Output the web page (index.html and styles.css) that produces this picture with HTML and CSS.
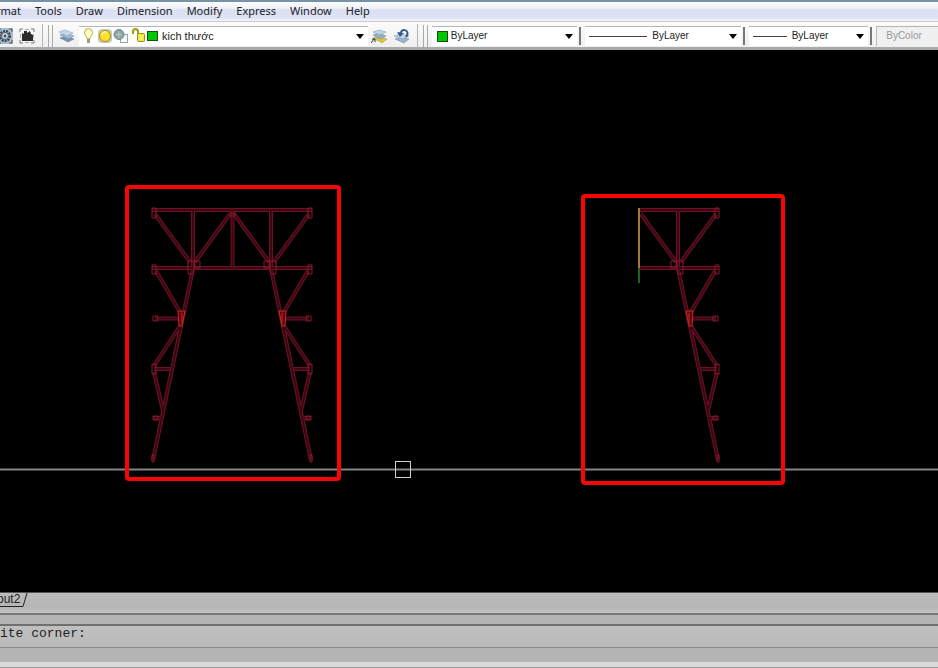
FILE: index.html
```html
<!DOCTYPE html>
<html lang="en">
<head>
<meta charset="utf-8">
<title>Drawing</title>
<link rel="stylesheet" href="styles.css">
</head>
<body>
<nav class="menubar">
  <button>rmat</button>
  <button>Tools</button>
  <button>Draw</button>
  <button>Dimension</button>
  <button>Modify</button>
  <button>Express</button>
  <button>Window</button>
  <button>Help</button>
</nav>

<div class="toolbar">
  <div class="tools">
    <button class="tool" aria-label="Settings">
      <svg width="16" height="16" viewBox="0 0 16 16"><rect width="16" height="16" fill="#a9bccb"/><path d="M1 1h3M1 1v3M15 1h-3M15 1v3M1 15h3M1 15v-3M15 15h-3M15 15v-3" stroke="#4c5a66" fill="none"/><circle cx="8" cy="8" r="5" fill="none" stroke="#35404a" stroke-width="2" stroke-dasharray="2 1"/><circle cx="8" cy="8" r="3.5" fill="#d4dfe8" stroke="#46525d"/><circle cx="8" cy="8" r="1.5" fill="#46525d"/></svg>
    </button>
    <button class="tool" aria-label="Block">
      <svg width="16" height="16" viewBox="0 0 16 16"><path d="M1 4V1h3M12 1h3v3M15 12v3h-3M4 15H1v-3" fill="none" stroke="#777"/><path d="M1.500 6v4M14.500 6v4M6 1.500h4M6 14.500h4" stroke="#aaa"/><path d="M3 13V5l2 1V3h3v2l3-2 1 3 2 1v6z" fill="#2b2b2b"/></svg>
    </button>
  </div>
  <span class="edge"></span>
  <span class="grip"></span>
  <button class="tool layers" aria-label="Layer manager">
    <svg width="16" height="16" viewBox="0 0 16 16"><path d="M1 10l6-2 8 3-6 3z" fill="#7893ad" stroke="#5f7a93" stroke-width=".5"/><path d="M1 7l6-2 8 3-6 3z" fill="#a1bad0" stroke="#6785a1" stroke-width=".5"/><path d="M0 4l6-2 8 3-6 3z" fill="#c6d9e8" stroke="#7c9ab6" stroke-width=".5"/></svg>
  </button>
  <div class="combo layer">
    <svg width="76" height="16" viewBox="0 0 76 16">
      <path d="M4 11C4 8 1.500 7.500 1.500 4.500a4 4 0 0 1 8 0C9.500 7.500 7 8 7 11z" fill="#fffcc0" stroke="#b9ae48"/><path d="M4 12h3M4 14h3" stroke="#777" stroke-width="1.500"/>
      <rect x="15" y="1" width="14" height="14" rx="4" fill="#c9ccb0"/><circle cx="22" cy="8" r="5.500" fill="#ffe02a" stroke="#a28e1e"/><path d="M18.500 7a4 4 0 0 1 5-3" stroke="#fff8a0" stroke-width="1.500" fill="none"/>
      <rect x="37.500" y="6.500" width="7" height="8" fill="#f5f7f8" stroke="#9aa6ae"/><circle cx="36" cy="6.500" r="5" fill="#8ba6a5" stroke="#6d8990"/><path d="M33 6.500h6M36 3.500v6" stroke="#b8cccb"/>
      <path d="M50 6V3.500a2.500 2.500 0 0 1 5 0V8" fill="none" stroke="#a09b10" stroke-width="2"/><rect x="54.500" y="5.500" width="7" height="8" rx="1" fill="#f1e83a" stroke="#969010"/><path d="M56 8h4M56 11h4" stroke="#fdf9a6"/>
      <rect x="64.500" y="3.500" width="10" height="9" fill="#00c800" stroke="#174d17"/>
    </svg>
    <select class="field wide" aria-label="Layer"><option>kich thước</option></select>
    <svg class="arrow" width="8" height="5" viewBox="0 0 8 5"><path d="M0 0h8L4 5z"/></svg>
  </div>
  <div class="tools pair">
    <button class="tool" aria-label="Make current">
      <svg width="16" height="16" viewBox="0 0 16 16"><path d="M2 10l5-2 9 3-5 4z" fill="#d9c832" stroke="#a4962c" stroke-width=".5"/><path d="M2 7l6-2 7 3-6 3z" fill="#8fb0cf" stroke="#64849f" stroke-width=".5"/><path d="M2 4l6-2 7 2-6 3z" fill="#bdd5e6" stroke="#7896ae" stroke-width=".5"/><path d="M0 15l3-4M1 11h3v3" fill="none" stroke="#30363c"/></svg>
    </button>
    <button class="tool" aria-label="Layer previous">
      <svg width="16" height="16" viewBox="0 0 16 16"><path d="M1 11l6-2 8 2-5 4z" fill="#98b4cc" stroke="#6582a0" stroke-width=".5"/><path d="M0 8l6-2 9 2-6 3z" fill="#c0d5e8" stroke="#7390ab" stroke-width=".5"/><path d="M12 9c3-4 1-7-2-7-2 0-3 1-4 4" fill="none" stroke="#365b8d" stroke-width="2"/><path d="M3 4l7 1-4 4z" fill="#365b8d"/></svg>
    </button>
  </div>
  <span class="edge"></span>
  <span class="grip"></span>
  <div class="combo color">
    <svg width="11" height="11" viewBox="0 0 11 11"><rect x=".5" y=".5" width="10" height="10" fill="#00c800" stroke="#174d17"/></svg>
    <select class="field" aria-label="Color"><option>ByLayer</option></select>
    <svg class="arrow" width="8" height="5" viewBox="0 0 8 5"><path d="M0 0h8L4 5z"/></svg>
  </div>
  <span class="bar"></span>
  <div class="combo linetype">
    <span class="sample long"></span>
    <select class="field" aria-label="Linetype"><option>ByLayer</option></select>
    <svg class="arrow" width="8" height="5" viewBox="0 0 8 5"><path d="M0 0h8L4 5z"/></svg>
  </div>
  <span class="bar"></span>
  <div class="combo weight">
    <span class="sample"></span>
    <select class="field" aria-label="Lineweight"><option>ByLayer</option></select>
    <svg class="arrow" width="8" height="5" viewBox="0 0 8 5"><path d="M0 0h8L4 5z"/></svg>
  </div>
  <span class="bar"></span>
  <div class="combo plot">
    <select class="field" aria-label="Plot style" disabled><option>ByColor</option></select>
  </div>
</div>

<main class="canvas">
  <svg class="drawing" viewBox="0 50 938 542" preserveAspectRatio="xMidYMin slice">
    <defs>
      <path id="members" d="M0 210H80M0 268H80M39 210V268M2 214L37 262M42 262L77 214M38 264L79 460M76 271L52 312M52 318.500H77M52 326L78 366M62 369H78M78 372L69 411M71 418H79"/>
      <g id="half">
        <use href="#members" class="flange"/>
        <use href="#members" class="web"/>
        <g class="plate">
          <path d="M76 208h4v10h-4zM76 265h4v9h-4zM76 364h4v10h-4zM78 455h2v7h-2zM32 261h6v7h-6zM37 261h7v13h-5zM74 316h5v5h-5zM74 416h5v4h-5z"/>
        </g>
        <path class="joint" d="M47 311h7l-1 15h-3zM50 313v10"/>
      </g>
    </defs>
    <path d="M0 469.500H938" stroke="#858585" stroke-width="2"/>
    <use href="#half" transform="translate(232 0)"/>
    <use href="#half" transform="translate(232 0) scale(-1 1)"/>
    <path class="flange" d="M232.500 210V268"/>
    <path class="web" d="M232.500 210V268"/>
    <path class="plate" d="M230 213h5v3h-5z"/>
    <use href="#half" transform="translate(639 0)"/>
    <path d="M639 208V268" stroke="#a17a38" stroke-width="2"/>
    <path d="M639 268V283" stroke="#14662c" stroke-width="2"/>
    <rect x="395.500" y="461.500" width="15" height="16" fill="none" stroke="#d0d0d0"/>
    <rect class="mark" x="127" y="187" width="212" height="292" rx="2"/>
    <rect class="mark" x="583" y="196" width="200" height="287" rx="2"/>
  </svg>
</main>

<footer>
  <div class="tabs">
    <button class="tab">out2</button>
    <svg class="slant" width="8" height="15" viewBox="0 0 8 15"><path d="M0 13.500h3L7 0" fill="none" stroke="#222"/></svg>
  </div>
  <div class="splitter"></div>
  <div class="command">ite corner:</div>
  <div class="prompt"></div>
  <div class="status"></div>
</footer>
</body>
</html>
```

FILE: styles.css
```css
* {
  box-sizing: border-box;
}

body {
  margin: 0;
  height: 100vh;
  display: flex;
  flex-direction: column;
  overflow: hidden;
  background: #000;
  font-family: "Liberation Sans", sans-serif;
}

button {
  border: 0;
  padding: 0;
  background: none;
  color: inherit;
  font: inherit;
}

.menubar {
  display: flex;
  gap: 14px;
  height: 21px;
  padding-bottom: 1px;
  margin-left: -4px;
  border-top: 2px solid #7891a4;
  background: linear-gradient(#fbfcfe, #f0f2fa 30%, #dadff2 45%, #dfe4f5 85%, #f5f6fa);
  font: 11px/18px "Noto Sans", sans-serif;
  color: #222;
}

.toolbar {
  display: flex;
  align-items: center;
  height: 29px;
  padding-top: 2px;
  border-top: 1px solid #c9c9cc;
  border-bottom: 3px solid #aaa;
  background: linear-gradient(#fbfbfb, #efefef);
}

.tools {
  display: flex;
  gap: 6px;
  margin-left: -3px;
}

.tool {
  display: flex;
}

.edge {
  width: 1px;
  height: 24px;
  margin-left: 7px;
  background: #b4b4b4;
}

.grip {
  width: 5px;
  height: 22px;
  margin-left: 5px;
  border-left: 1px solid #aaa;
  border-right: 1px solid #aaa;
}

.layers {
  margin: 0 4px 0 6px;
}

.pair {
  gap: 7px;
  margin-left: 3px;
}

.combo {
  display: flex;
  align-items: center;
  min-width: 0;
  height: 20px;
  padding-right: 4px;
  border-top: 1px solid #b5b5b5;
  background: #fff;
}

.layer {
  flex: 2 2 291px;
  padding-left: 4px;
}

.color {
  flex: 1 1 146px;
  margin-left: 4px;
  padding-left: 5px;
}

.linetype {
  flex: 1 1 156px;
  padding-left: 4px;
}

.weight {
  flex: 1 1 120px;
  padding-left: 4px;
}

.plot {
  flex: 1 1 62px;
  padding-left: 9px;
  border-left: 1px solid #bbb;
  background: #f0f0f0;
}

.field {
  flex: 1;
  min-width: 0;
  height: 18px;
  padding: 0 0 0 3px;
  border: 0;
  appearance: none;
  background: none;
  color: #222;
  font: 10px/18px "Liberation Sans", sans-serif;
}

.wide {
  font-size: 11px;
}

.sample + .field {
  padding-left: 5px;
}

.plot .field {
  padding: 0;
  color: #999;
  opacity: 1;
}

.arrow {
  flex: none;
}

.bar {
  width: 2px;
  height: 18px;
  margin: 0 4px 0 2px;
  background: #777;
}

.sample {
  width: 34px;
  height: 1px;
  background: #444;
}

.long {
  width: 58px;
}

.canvas {
  flex: 1;
  min-height: 0;
}

.drawing {
  display: block;
  width: 100%;
  height: 100%;
}

.flange {
  fill: none;
  stroke: #6f1024;
  stroke-width: 4px;
}

.web {
  fill: none;
  stroke: #3a0812;
  stroke-width: 2px;
}

.plate {
  fill: none;
  stroke: #8c162e;
}

.joint {
  fill: #570b13;
  stroke: #d02222;
}

.mark {
  fill: none;
  stroke: #f80606;
  stroke-width: 4px;
}

footer {
  background: #b9b9b9;
}

.tabs {
  display: flex;
  height: 21px;
  border-top: 1px solid #555;
  background: linear-gradient(#bcbcbc, #b5b5b5 70%, #c2c2c2);
}

.tab {
  height: 14px;
  margin-left: -3px;
  border-bottom: 1px solid #222;
  font-size: 12px;
  line-height: 13px;
  color: #222;
}

.slant {
  flex: none;
}

.splitter {
  height: 13px;
  border-top: 2px solid #777;
  border-bottom: 2px solid #707070;
  background: #b4b4b4;
}

.command {
  height: 22px;
  border-bottom: 1px solid #8a8a8a;
  background: linear-gradient(#c0c0c0, #b9b9b9);
  color: #222;
  font: 13px/15px "Liberation Mono", monospace;
}

.prompt {
  height: 14px;
  background: #b4b4b4;
}

.status {
  height: 6px;
  border-bottom: 1px solid #999;
  background: #dadada;
}
```
